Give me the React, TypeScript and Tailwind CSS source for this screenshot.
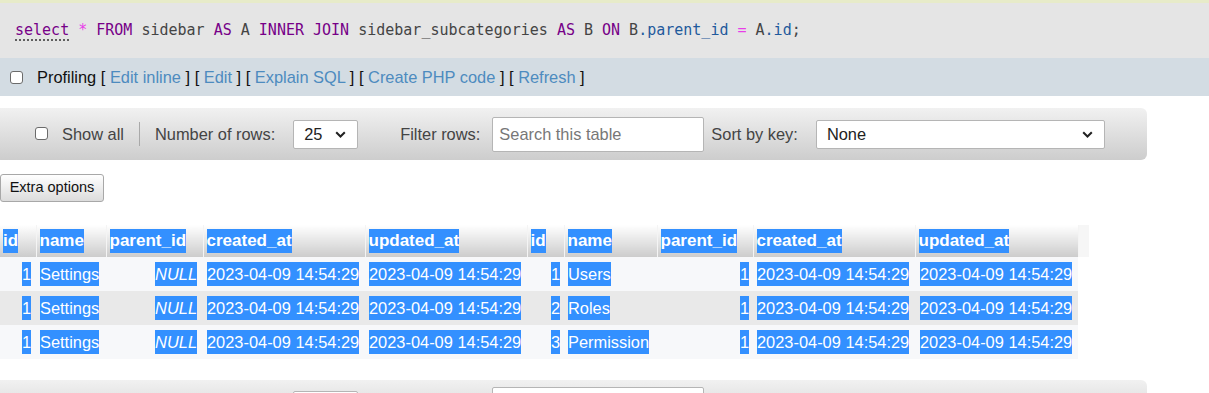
import React from "react";

const sel = "inline-block h-[24px] leading-[24px] bg-[#3390ff] text-white";

function Box() {
  return <span className="inline-block h-[13px] w-[13px] shrink-0 rounded-[3px] border border-[#6b6b6b] bg-white" />;
}

function Chevron() {
  return (
    <svg width="11" height="7" viewBox="0 0 11 7" className="shrink-0">
      <path d="M1.2 1.2l4.3 4.3 4.3-4.3" fill="none" stroke="#222" strokeWidth="2" />
    </svg>
  );
}

function FakeSelect({ value, width }: { value: string; width: string }) {
  return (
    <div
      className={`flex h-[29px] items-center justify-between rounded-[2px] border border-[#b5b5b5] bg-white pl-[10px] pr-[11px] text-[16.4px] text-[#222] ${width}`}
    >
      <span>{value}</span>
      <Chevron />
    </div>
  );
}

function NavBar() {
  return (
    <div className="flex h-[52px] w-[1147px] items-center rounded-r-[6px] bg-gradient-to-b from-[#f1f1f1] to-[#cdcdcd] text-[16.4px] text-[#444]">
      <span className="ml-[35px]">
        <Box />
      </span>
      <span className="ml-[14px]">Show all</span>
      <span className="ml-[15px] h-[24px] w-px bg-[#a9a9a9]" />
      <span className="ml-[15px]">Number of rows:</span>
      <div className="ml-[18px]">
        <FakeSelect value="25" width="w-[65px]" />
      </div>
      <span className="ml-[42px]">Filter rows:</span>
      <div className="ml-[12px] flex h-[35px] w-[212px] items-center rounded-[2px] border border-[#b5b5b5] bg-white pl-[6px] text-[#777]">
        Search this table
      </div>
      <span className="ml-[7px]">Sort by key:</span>
      <div className="ml-[18px]">
        <FakeSelect value="None" width="w-[289px]" />
      </div>
    </div>
  );
}

// the lower copy of the bar is cut by the window: only its top edge and the tops of its fields show
function NavBarEdge() {
  return (
    <div className="flex h-[52px] w-[1147px] items-start rounded-tr-[6px] bg-gradient-to-b from-[#f1f1f1] to-[#cdcdcd]">
      <div className="ml-[293px] mt-[11px] h-[29px] w-[65px] rounded-[2px] border border-[#b5b5b5] bg-white" />
      <div className="ml-[134px] mt-[7px] h-[35px] w-[212px] rounded-[2px] border border-[#b5b5b5] bg-white" />
    </div>
  );
}

const headers = ["id", "name", "parent_id", "created_at", "updated_at", "id", "name", "parent_id", "created_at", "updated_at"];
const widths = ["w-[36px]", "w-[70px]", "w-[97px]", "w-[162px]", "w-[162px]", "w-[37px]", "w-[93px]", "w-[96px]", "w-[162px]", "w-[163px]"];
const stamp = "2023-04-09 14:54:29";
const rows = [
  { sub: "1", name: "Users" },
  { sub: "2", name: "Roles" },
  { sub: "3", name: "Permission" },
];

export default function App() {
  return (
    <div className="h-[393px] w-[1209px] overflow-hidden bg-white font-['Liberation_Sans',Arial,sans-serif]">
      <div className="h-[3px] bg-[#e7ebc9]" />

      <div className="flex h-[55px] items-center bg-[#e5e5e5] pl-[15px] font-['DejaVu_Sans_Mono',monospace] text-[15px] text-[#444] whitespace-pre">
        <span className="text-[#770088] underline decoration-dotted decoration-[#333] underline-offset-[4px]">select</span>
        <span> </span>
        <span className="text-[#e83ee8]">*</span>
        <span> </span>
        <span className="text-[#770088]">FROM</span>
        <span> sidebar </span>
        <span className="text-[#770088]">AS</span>
        <span> A </span>
        <span className="text-[#770088]">INNER JOIN</span>
        <span> sidebar_subcategories </span>
        <span className="text-[#770088]">AS</span>
        <span> B </span>
        <span className="text-[#770088]">ON</span>
        <span> B</span>
        <span className="text-[#1f5a9c]">.parent_id</span>
        <span> </span>
        <span className="text-[#e83ee8]">=</span>
        <span> A</span>
        <span className="text-[#1f5a9c]">.id</span>
        <span>;</span>
      </div>

      <div className="flex h-[38px] items-center bg-[#d3dce3] pl-[10px] text-[16.4px] text-[#111] whitespace-pre">
        <Box />
        <span className="ml-[14px]">
          Profiling [ <span className="text-[#4d8bbf]">Edit inline</span> ] [ <span className="text-[#4d8bbf]">Edit</span> ] [{" "}
          <span className="text-[#4d8bbf]">Explain SQL</span> ] [ <span className="text-[#4d8bbf]">Create PHP code</span> ] [{" "}
          <span className="text-[#4d8bbf]">Refresh</span> ]
        </span>
      </div>

      <div className="mt-[12px]">
        <NavBar />
      </div>

      <div className="mt-[14px]">
        <button className="h-[28px] w-[104px] rounded-[3px] border border-[#a8a8a8] bg-gradient-to-b from-[#ffffff] to-[#dcdcdc] text-[14.5px] text-[#111]">
          Extra options
        </button>
      </div>

      <table className="mt-[23px] table-fixed border-collapse text-[16.4px]">
        <colgroup>
          {widths.map((w, i) => (
            <col key={i} className={w} />
          ))}
          <col className="w-[11px]" />
        </colgroup>
        <thead>
          <tr className="h-[32px]">
            {headers.map((h, i) => (
              <th
                key={i}
                className="border-r border-[#f4f4f4] bg-gradient-to-b from-[#ffffff] to-[#cccccc] px-[3px] text-left text-[17px] font-bold"
              >
                <span className={sel}>{h}</span>
              </th>
            ))}
            <th className="bg-[#f6f6f6]" />
          </tr>
        </thead>
        <tbody>
          {rows.map((r, i) => (
            <tr key={i} className={`h-[34px] ${i % 2 === 1 ? "bg-[#e9e9e9]" : "bg-[#f7f8fa]"}`}>
              <td className="px-[5px] text-right">
                <span className={sel}>1</span>
              </td>
              <td className="px-[4px]">
                <span className={sel}>Settings</span>
              </td>
              <td className="px-[6px] text-right italic">
                <span className={sel}>NULL</span>
              </td>
              <td className="px-[4px]">
                <span className={sel}>{stamp}</span>
              </td>
              <td className="px-[4px]">
                <span className={sel}>{stamp}</span>
              </td>
              <td className="px-[4px] text-right">
                <span className={sel}>{r.sub}</span>
              </td>
              <td className="px-[4px]">
                <span className={sel}>{r.name}</span>
              </td>
              <td className="px-[4px] text-right">
                <span className={sel}>1</span>
              </td>
              <td className="px-[4px]">
                <span className={sel}>{stamp}</span>
              </td>
              <td className="px-[5px]">
                <span className={sel}>{stamp}</span>
              </td>
              <td className="bg-white" />
            </tr>
          ))}
        </tbody>
      </table>

      <div className="mt-[21px]">
        <NavBarEdge />
      </div>
    </div>
  );
}
